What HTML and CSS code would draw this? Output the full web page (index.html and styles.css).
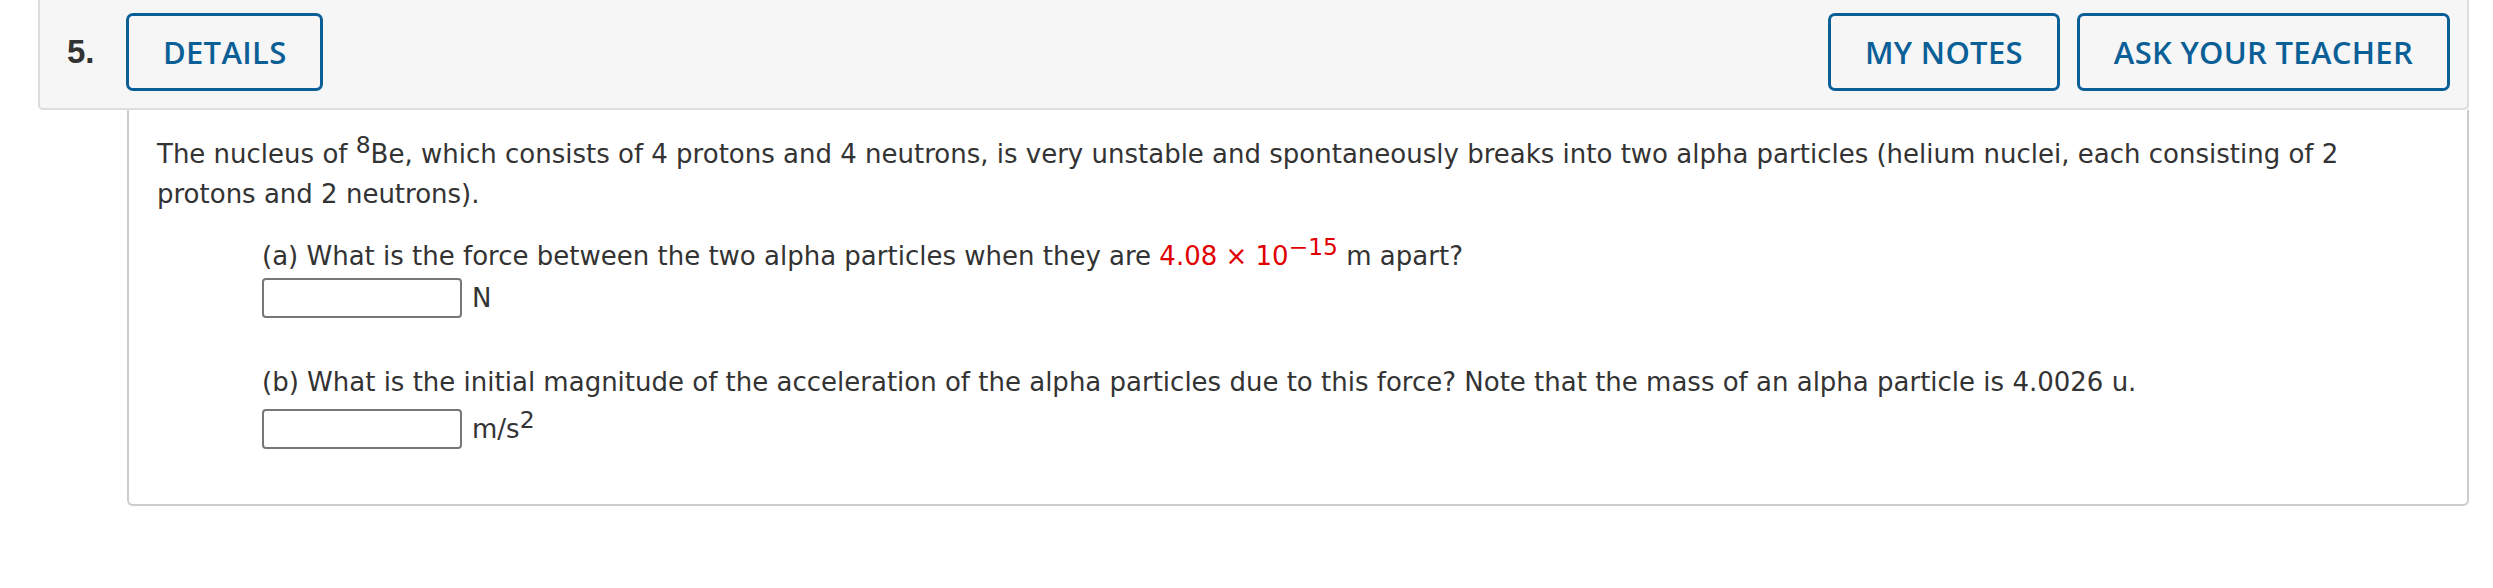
FILE: index.html
```html
<!DOCTYPE html>
<html lang="en">
<head>
<meta charset="utf-8">
<title>Question 5</title>
<link rel="stylesheet" href="styles.css">
</head>
<body>
<div class="question">
  <div class="q-header">
    <div class="q-num">5.</div>
    <button class="q-btn">DETAILS</button>
    <div class="spacer"></div>
    <button class="q-btn">MY NOTES</button>
    <button class="q-btn">ASK YOUR TEACHER</button>
  </div>
  <div class="q-body">
    <p class="intro">The nucleus of <sup>8</sup>Be, which consists of 4 protons and 4 neutrons, is very unstable and spontaneously breaks into two alpha particles (helium nuclei, each consisting of 2 protons and 2 neutrons).</p>
    <div class="part">
      <p class="prompt">(a) What is the force between the two alpha particles when they are <span class="red">4.08 &times; 10<sup>&minus;15</sup></span> m apart?</p>
      <div class="answer"><input class="box" type="text"><span class="unit">N</span></div>
    </div>
    <div class="part">
      <p class="prompt">(b) What is the initial magnitude of the acceleration of the alpha particles due to this force? Note that the mass of an alpha particle is 4.0026 u.</p>
      <div class="answer"><input class="box" type="text"><span class="unit">m/s<sup>2</sup></span></div>
    </div>
  </div>
</div>
</body>
</html>
```
FILE: styles.css
```css
html, body {
  margin: 0;
  padding: 0;
  background: #ffffff;
}
.question {
  margin-left: 38px;
  width: 2431px;
}
.q-header {
  display: flex;
  align-items: flex-start;
  padding: 13px 17px 0 27px;
  box-sizing: border-box;
  height: 110px;
  background: #f6f6f6;
  border: 2px solid #dddddd;
  border-top: none;
  border-radius: 0 0 5px 5px;
}
.q-num {
  width: 59px;
  font-family: "Liberation Sans", Arial, sans-serif;
  font-weight: bold;
  font-size: 33px;
  line-height: 78px;
  color: #333333;
}
.spacer {
  flex: 1;
}
.q-btn {
  height: 78px;
  margin-left: 17px;
  padding: 0 34px;
  background: transparent;
  border: 3px solid #0b5f97;
  border-radius: 7px;
  color: #0b5f97;
  font-family: "Open Sans", sans-serif;
  font-size: 31px;
  font-weight: 600;
  letter-spacing: 0.3px;
}
.q-num + .q-btn {
  margin-left: 0;
}
.q-body {
  margin-left: 89px;
  height: 396px;
  box-sizing: border-box;
  padding: 24px 28px 0 28px;
  border: 2px solid #cccccc;
  border-top: none;
  border-radius: 0 0 6px 6px;
  font-family: "DejaVu Sans", Verdana, sans-serif;
  font-size: 26px;
  color: #333333;
}
p {
  margin: 0;
}
.intro {
  line-height: 40px;
}
sup {
  font-size: 0.9em;
  line-height: 0;
  vertical-align: 0.42em;
}
.part {
  margin-left: 105px;
}
.part:first-of-type {
  margin-top: 22px;
}
.prompt {
  line-height: 40px;
}
.answer {
  display: flex;
  align-items: center;
  height: 44px;
}
.part + .part {
  margin-top: 42px;
}
.part + .part .answer {
  margin-top: 5px;
}
.box {
  width: 200px;
  height: 40px;
  box-sizing: border-box;
  margin: 0;
  border: 2px solid #777777;
  border-radius: 4px;
  background: #ffffff;
}
.unit {
  margin-left: 10px;
}
.red {
  color: #e00000;
}
```
